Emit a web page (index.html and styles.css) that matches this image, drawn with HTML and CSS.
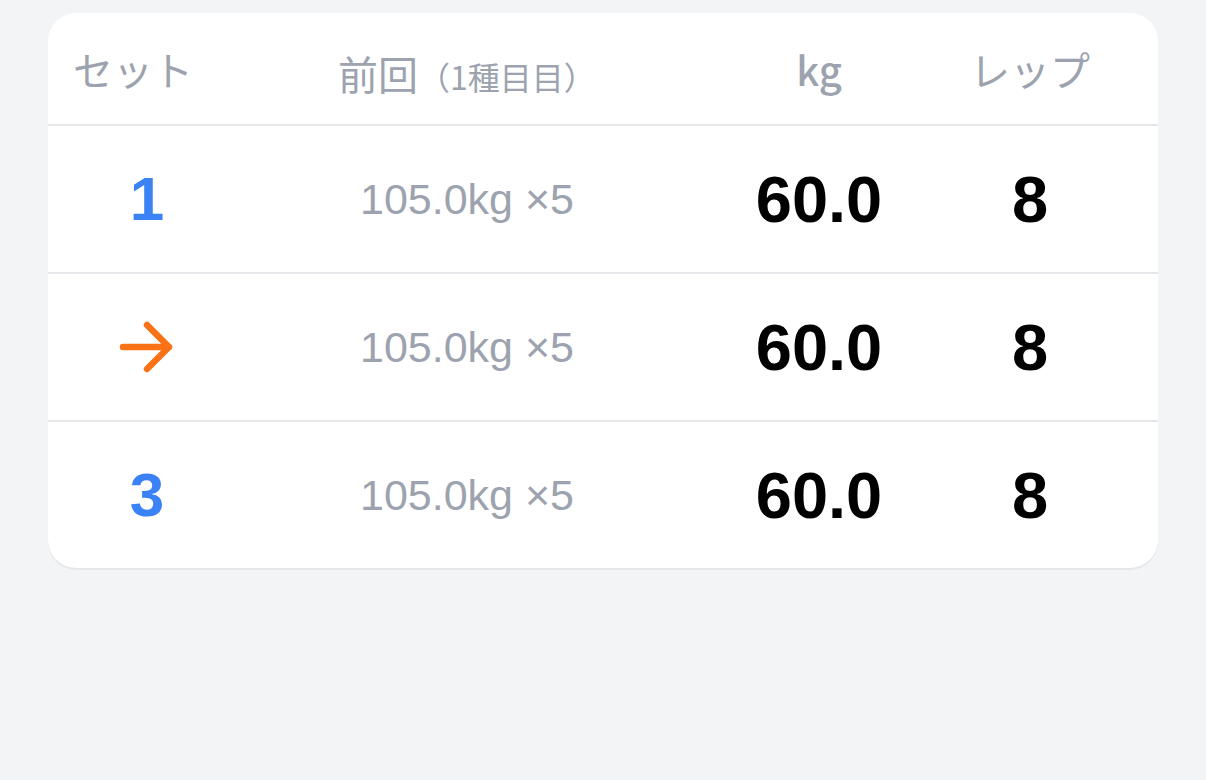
FILE: index.html
```html
<!DOCTYPE html>
<html>
<head>
	<title>セット</title>
	<link rel="stylesheet" href="styles.css">
</head>
<body>
	<div class="card">
		<div class="row head">
			<div class="cell set-head">セット</div>
			<div class="cell prev-head">前回<span class="sub">（1種目目）</span></div>
			<div class="cell unit">kg</div>
			<div class="cell">レップ</div>
		</div>
		<div class="row">
			<div class="cell set-no">1</div>
			<div class="cell prev">105.0kg ×5</div>
			<div class="cell num">60.0</div>
			<div class="cell num">8</div>
		</div>
		<div class="row">
			<div class="cell set-no">
				<svg class="arrow" width="56" height="52" viewBox="0 0 56 52">
					<path d="M4 26 H50 M28 4 L50 26 L28 48" fill="none" stroke="#f97316" stroke-width="6.5" stroke-linecap="round" stroke-linejoin="round"/>
				</svg>
			</div>
			<div class="cell prev">105.0kg ×5</div>
			<div class="cell num">60.0</div>
			<div class="cell num">8</div>
		</div>
		<div class="row">
			<div class="cell set-no">3</div>
			<div class="cell prev">105.0kg ×5</div>
			<div class="cell num">60.0</div>
			<div class="cell num">8</div>
		</div>
	</div>
</body>
</html>
```

FILE: styles.css
```css
body {
	margin: 0;
	padding: 13px 48px;
	background-color: #f3f4f6;
	font-family: 'Liberation Sans', Arial, sans-serif;
}

.card {
	width: 1110px;
	background-color: #fff;
	border-radius: 28px;
	box-shadow: 0 2px 0 #e5e7eb;
	overflow: hidden;
}

.row {
	display: grid;
	grid-template-columns: 198px 442px 262px 160px 1fr;
	align-items: center;
	height: 146px;
	border-top: 2px solid #e5e7eb;
}

.row.head {
	height: 111px;
	border-top: none;
	font-family: 'Noto Sans CJK JP', sans-serif;
	font-weight: 400;
	font-size: 40px;
	color: #9ca3af;
}

.cell {
	text-align: center;
	line-height: 1;
}

.set-head {
	text-align: left;
	padding-left: 25px;
}

.prev-head {
	padding-top: 9px;
}

.prev-head .sub {
	font-size: 32px;
}

.unit {
	font-weight: 500;
}

.set-no {
	font-size: 62px;
	font-weight: bold;
	color: #3b82f6;
	display: flex;
	justify-content: center;
}

.prev {
	font-size: 43px;
	color: #9ca3af;
}

.num {
	font-size: 65px;
	font-weight: bold;
	color: #000;
}

.arrow {
	display: block;
}
```
